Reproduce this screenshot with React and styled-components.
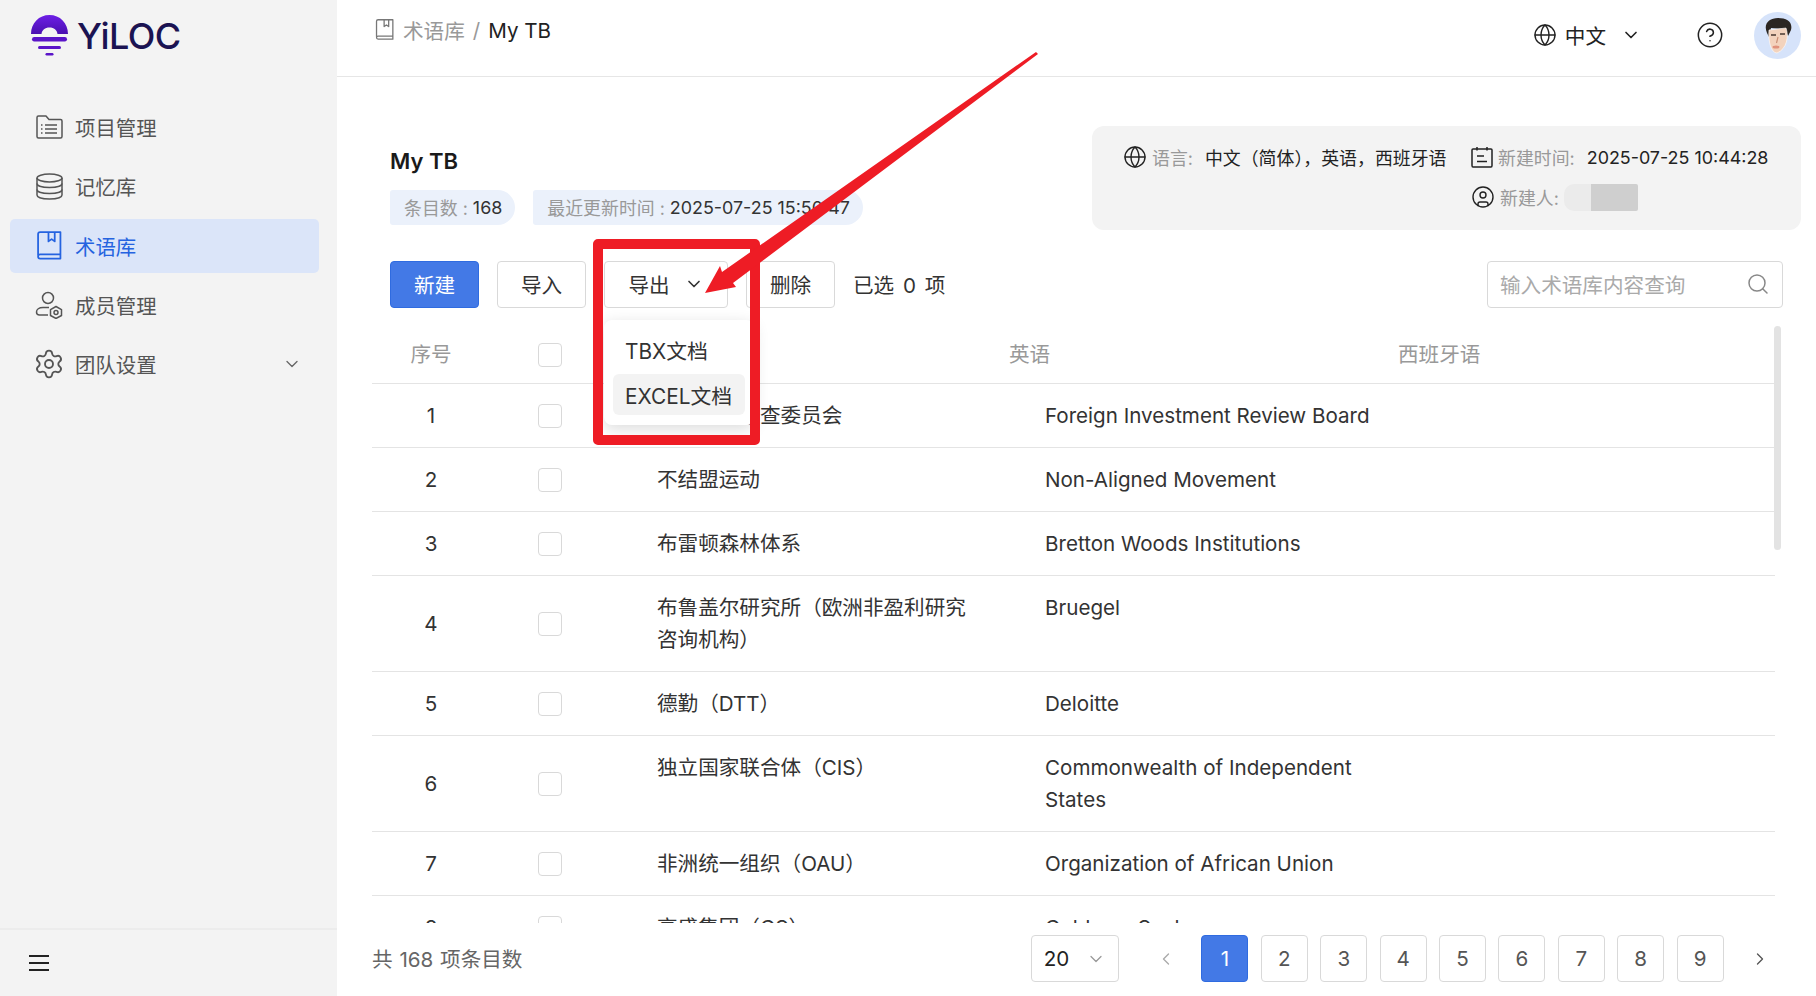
import React from 'react';
import styled, { createGlobalStyle } from 'styled-components';
import { ChevronDown, ChevronLeft, ChevronRight, CircleHelp, CircleUser, Globe, Search, Settings } from 'lucide-react';

const GlobalStyle = createGlobalStyle`
  html, body { margin: 0; padding: 0; background: #fff; }
  body { font-family: Inter, "Noto Sans CJK SC", "Liberation Sans", sans-serif; color: #333; }
  * { box-sizing: border-box; }
`;

const Page = styled.div`
  position: relative;
  display: flex;
  width: 1816px;
  height: 996px;
  overflow: hidden;
`;

const Sidebar = styled.aside`
  width: 337px;
  flex: none;
  display: flex;
  flex-direction: column;
  background: #f3f3f3;
`;

const LogoRow = styled.div`
  height: 100.5px;
  flex: none;
  padding: 15px 0 0 31px;
  display: flex;
  align-items: flex-start;
  gap: 9px;
`;

const LogoText = styled.span`
  font-size: 36px;
  line-height: 43px;
  font-weight: 500;
  letter-spacing: -0.6px;
  color: #1b1352;
`;

const Nav = styled.nav`
  flex: 1;
  padding: 0 18px 0 10px;
  display: flex;
  flex-direction: column;
  gap: 5.3px;
`;

const NavItem = styled.div`
  height: 54px;
  padding: 0 21px 1px 25px;
  display: flex;
  align-items: center;
  gap: 12px;
  border-radius: 5px;
  font-size: 20.4px;
  color: ${props => (props.$active ? '#2563e0' : '#555')};
  background: ${props => (props.$active ? '#dbe5f9' : 'transparent')};
`;

const NavIcon = styled.span`
  width: 28px;
  height: 28px;
  flex: none;
  display: flex;
  align-items: center;
  justify-content: center;
  svg { flex: none; }
`;

const NavArrow = styled.span`
  margin: 0 -4px 0 auto;
  display: flex;
  color: #666;
`;

const SideBottom = styled.div`
  height: 68px;
  flex: none;
  padding-left: 28px;
  display: flex;
  align-items: center;
  border-top: 2px solid #ececec;
`;

const Main = styled.main`
  flex: 1;
  min-width: 0;
  display: flex;
  flex-direction: column;
`;

const Header = styled.header`
  height: 77px;
  flex: none;
  padding: 0 15px 0 38px;
  display: flex;
  justify-content: space-between;
  align-items: flex-start;
  border-bottom: 1.5px solid #e6e6e6;
`;

const Breadcrumb = styled.div`
  height: 60px;
  display: flex;
  align-items: center;
  font-size: 20.6px;
`;

const CrumbIcon = styled.span`
  display: flex;
  margin-right: 9px;
  color: #777;
`;

const CrumbLink = styled.span`
  color: #999;
`;

const CrumbSep = styled.span`
  color: #999;
  margin: 0 8px;
`;

const CrumbNow = styled.span`
  color: #222;
`;

const HeaderRight = styled.div`
  height: 70px;
  display: flex;
  align-items: center;
`;

const LangPick = styled.div`
  display: flex;
  align-items: center;
  gap: 8px;
  font-size: 20.6px;
  color: #222;
  margin-right: 55px;
`;

const HelpIcon = styled.span`
  display: flex;
  color: #222;
  margin-right: 30px;
`;

const Avatar = styled.div`
  width: 47px;
  height: 47px;
  border-radius: 50%;
  overflow: hidden;
  background: #d6e3fa;
`;

const TopRow = styled.section`
  flex: none;
  margin-top: 49px;
  padding: 0 15px 0 53px;
  display: flex;
  justify-content: space-between;
  align-items: flex-start;
`;

const TitleBlock = styled.div`
  padding-top: 21px;
`;

const Title = styled.h1`
  margin: 0 0 15px;
  font-size: 22px;
  line-height: 28px;
  font-weight: 600;
  color: #1a1a1a;
`;

const Tags = styled.div`
  display: flex;
  gap: 18px;
`;

const Tag = styled.div`
  height: 35px;
  padding: 0 13px 1px 14px;
  display: flex;
  align-items: center;
  gap: 5px;
  font-size: 17.9px;
  color: #333;
  background: #ebf1fb;
  border-radius: 3px 18px 18px 3px;
`;

const TagLabel = styled.span`
  color: #999;
`;

const InfoPanel = styled.div`
  width: 709px;
  height: 104px;
  padding: 17px 0 0 31px;
  display: grid;
  grid-template-columns: 348px 1fr;
  grid-auto-rows: 28px;
  row-gap: 12px;
  background: #f3f3f3;
  border-radius: 12px;
  font-size: 17.9px;
`;

const InfoItem = styled.div`
  display: flex;
  align-items: center;
  grid-column: ${props => props.$col || 'auto'};
  white-space: nowrap;
  color: #222;
`;

const InfoIcon = styled.span`
  display: flex;
  margin-right: 5px;
  color: #222;
`;

const InfoLabel = styled.span`
  color: #999;
  margin-right: 12px;
`;

const Masked = styled.span`
  display: block;
  width: 74px;
  height: 27px;
  margin-left: -7px;
  border-radius: 10px 2px 2px 10px;
  background: linear-gradient(to right, #ebebeb 27px, #cfcfcf 27px);
`;

const Toolbar = styled.section`
  flex: none;
  margin-top: 31px;
  padding: 0 33px 0 53px;
  display: flex;
  align-items: center;
  gap: 18px;
`;

const Button = styled.div`
  height: 47px;
  width: ${props => props.$width || 89}px;
  padding-bottom: 2px;
  display: flex;
  align-items: center;
  justify-content: center;
  gap: 14px;
  font-size: 20.6px;
  border-radius: 4px;
  color: ${props => (props.$primary ? '#fff' : '#333')};
  background: ${props => (props.$primary ? '#4379e6' : '#fff')};
  border: 1px solid ${props => (props.$primary ? '#2f6be0' : '#d9d9d9')};
`;

const ExportWrap = styled.div`
  position: relative;
`;

const Dropdown = styled.div`
  position: absolute;
  left: 0;
  top: 59px;
  width: 150px;
  height: 105px;
  padding: 10px 9px;
  display: flex;
  flex-direction: column;
  gap: 3.5px;
  background: #fff;
  border-radius: 8px;
  box-shadow: 0 4px 16px rgba(0, 0, 0, 0.14);
  z-index: 5;
`;

const DropItem = styled.div`
  height: 41px;
  padding-left: 12px;
  display: flex;
  align-items: center;
  font-size: 20.8px;
  color: #333;
  border-radius: 6px;
  white-space: nowrap;
  background: ${props => (props.$hover ? '#f3f3f3' : 'transparent')};
`;

const RedBox = styled.div`
  position: absolute;
  left: -11px;
  top: -22px;
  width: 167px;
  height: 206px;
  border: 10px solid #ee1c25;
  border-radius: 5px;
  z-index: 6;
`;

const Selected = styled.span`
  font-size: 20.6px;
  word-spacing: 3px;
  color: #333;
  margin-bottom: 2px;
`;

const SearchBox = styled.div`
  margin-left: auto;
  width: 296px;
  height: 47px;
  padding: 0 12px 2px;
  display: flex;
  align-items: center;
  justify-content: space-between;
  border: 1px solid #d9d9d9;
  border-radius: 4px;
  font-size: 20.6px;
  color: #aaa;
  svg { color: #888; }
`;

const TableWrap = styled.section`
  position: relative;
  flex: 1;
  min-height: 0;
  margin: 18px 0 0 35px;
  overflow: hidden;
`;

const Table = styled.div`
  width: 1403px;
`;

const Row = styled.div`
  display: grid;
  grid-template-columns: 118px 120px 399px 389px 1fr;
  align-items: center;
  border-bottom: 1.5px solid #e4e4e4;
  font-size: 20.6px;
  line-height: 32px;
`;

const HeadRow = styled(Row)`
  height: 58px;
  color: #999;
`;

const BodyRow = styled(Row)`
  min-height: 64px;
  padding: 16px 0 15px;
  color: #333;
`;

const NumCell = styled.div`
  text-align: center;
`;

const CheckCell = styled.div`
  display: flex;
  justify-content: center;
`;

const TermCell = styled.div`
  align-self: start;
  padding: 0 30px 0 47px;
`;

const EnCell = styled.div`
  align-self: start;
  padding: 0 10px 0 36px;
`;

const Checkbox = styled.span`
  display: block;
  width: 24px;
  height: 24px;
  border: 1.5px solid #d9d9d9;
  border-radius: 4px;
  background: #fff;
`;

const ScrollThumb = styled.div`
  position: absolute;
  left: 1402px;
  top: 0;
  width: 7px;
  height: 224px;
  border-radius: 4px;
  background: #e3e3e3;
`;

const Footer = styled.footer`
  height: 73px;
  flex: none;
  padding: 0 33px 2px 35px;
  display: flex;
  align-items: center;
  justify-content: space-between;
  background: #fff;
`;

const Total = styled.span`
  font-size: 20.6px;
  word-spacing: 1px;
  color: #666;
  margin-bottom: 2px;
`;

const Pager = styled.div`
  display: flex;
  align-items: center;
  gap: 12.4px;
`;

const SizeSelect = styled.div`
  width: 88px;
  height: 47px;
  margin-right: 11px;
  padding: 0 12px;
  display: flex;
  align-items: center;
  justify-content: space-between;
  border: 1px solid #d9d9d9;
  border-radius: 4px;
  font-size: 20.6px;
  color: #222;
  svg { color: #999; }
`;

const PageArrow = styled.span`
  width: 47px;
  height: 47px;
  display: flex;
  align-items: center;
  justify-content: center;
  color: ${props => (props.$off ? '#aaa' : '#555')};
`;

const PageBtn = styled.div`
  width: 47px;
  height: 47px;
  display: flex;
  align-items: center;
  justify-content: center;
  font-size: 20.6px;
  border-radius: 4px;
  color: ${props => (props.$active ? '#fff' : '#555')};
  background: ${props => (props.$active ? '#4379e6' : '#fff')};
  border: 1px solid ${props => (props.$active ? '#2f6be0' : '#d9d9d9')};
`;

const ArrowLayer = styled.svg`
  position: absolute;
  left: 0;
  top: 0;
  z-index: 7;
  pointer-events: none;
`;

const rows = [
  { id: 1, term: '外国投资审查委员会', en: 'Foreign Investment Review Board' },
  { id: 2, term: '不结盟运动', en: 'Non-Aligned Movement' },
  { id: 3, term: '布雷顿森林体系', en: 'Bretton Woods Institutions' },
  { id: 4, term: '布鲁盖尔研究所（欧洲非盈利研究咨询机构）', en: 'Bruegel' },
  { id: 5, term: '德勤（DTT）', en: 'Deloitte' },
  { id: 6, term: '独立国家联合体（CIS）', en: 'Commonwealth of Independent States' },
  { id: 7, term: '非洲统一组织（OAU）', en: 'Organization of African Union' },
  { id: 8, term: '高盛集团（GS）', en: 'Goldman Sachs' },
];

const LogoMark = () => (
  <svg width="37" height="41" viewBox="0 0 37 41">
    <defs>
      <linearGradient id="logoFill" x1="0" y1="0" x2="0" y2="1">
        <stop offset="0" stopColor="#6d1fe6" />
        <stop offset="1" stopColor="#4a0fb0" />
      </linearGradient>
    </defs>
    <path d="M0 19C0 8 8 0 18.500 0S37 8 37 19H26.500C26 15 23 12.500 18.500 12.500S11 15 10.500 19Z" fill="url(#logoFill)" />
    <rect x="1" y="22" width="35" height="4.500" rx="2.200" fill="#5a14c8" />
    <rect x="7" y="31" width="23" height="3" rx="1.500" fill="#5a14c8" />
    <rect x="14.500" y="38" width="8" height="2.500" rx="1.200" fill="#5a14c8" />
  </svg>
);

const FolderIcon = () => (
  <svg width="27" height="24" viewBox="0 0 27 24" fill="none" stroke="currentColor" strokeWidth="1.500" strokeLinejoin="round">
    <path d="M1 2.500C1 1.500 1.500 1 2.500 1H10L13 4.500H24.500C25.500 4.500 26 5 26 6V21.500C26 22.500 25.500 23 24.500 23H2.500C1.500 23 1 22.500 1 21.500Z" />
    <path d="M9 10H21M9 14H21M9 18H21M5 10H6.500M5 14H6.500M5 18H6.500" />
  </svg>
);

const DatabaseIcon = () => (
  <svg width="27" height="27" viewBox="0 0 27 27" fill="none" stroke="currentColor" strokeWidth="1.500">
    <ellipse cx="13.500" cy="5" rx="12.500" ry="4" />
    <path d="M1 5V22C1 24.500 6.500 26 13.500 26S26 24.500 26 22V5" />
    <path d="M1 10.500C1 13 6.500 14.500 13.500 14.500S26 13 26 10.500" />
    <path d="M1 16.500C1 19 6.500 20.500 13.500 20.500S26 19 26 16.500" />
  </svg>
);

const BookIcon = ({ size = 26 }) => (
  <svg width={size} height={size * 1.12} viewBox="0 0 25 28" fill="none" stroke="currentColor" strokeWidth="1.700" strokeLinejoin="round">
    <path d="M2 23.500V3C2 2 2.500 1 4 1H23.500V26.500H4C2.500 26.500 2 25.500 2 24.500C2 23 3 22.500 4 22.500H23.500" />
    <path d="M12 1V10L15 7.800L18 10V1" />
  </svg>
);

const MemberIcon = () => (
  <svg width="28" height="28" viewBox="0 0 28 28" fill="none" stroke="currentColor" strokeWidth="1.500" strokeLinejoin="round">
    <circle cx="13" cy="7" r="5.500" />
    <path d="M14 16.500H8C4 16.500 1.500 18.500 1.500 21C1.500 23 2.500 24 4.500 24H13" />
    <path d="M21 15.500L26.500 18.700V24.500L21 27.500L15.500 24.500V18.700Z" />
    <circle cx="21" cy="21.500" r="2" />
  </svg>
);

const CalendarIcon = () => (
  <svg width="22" height="22" viewBox="0 0 22 22" fill="none" stroke="currentColor" strokeWidth="1.500" strokeLinejoin="round">
    <path d="M6 3H16M6 1V4.500M16 1V4.500M6 3H2C1.500 3 1 3.500 1 4V19.500C1 20.500 1.500 21 2 21H20C20.500 21 21 20.500 21 19.500V4C21 3.500 20.500 3 20 3H16" />
    <path d="M6 10H13M6 15.500H16" />
  </svg>
);

const MenuIcon = () => (
  <svg width="22" height="18" viewBox="0 0 22 18" stroke="#222" strokeWidth="2">
    <path d="M1 2H21M1 9H21M1 16H21" />
  </svg>
);

const Face = () => (
  <svg width="47" height="47" viewBox="0 0 47 47">
    <path d="M13 21C9 12 15 6 24 6C33 6 39 10 37 18L34 24L31 17L17 16L15 25Z" fill="#2b2622" />
    <path d="M15 18L32 16C35 24 33 37 23 41C17 41 14 29 15 18Z" fill="#f3d3bd" stroke="#fff" strokeWidth="0.600" />
    <path d="M17 23H22M26 22H31" stroke="#4a3a32" strokeWidth="1.500" />
    <path d="M24 25L22.500 31" stroke="#c98f76" strokeWidth="1.200" fill="none" />
    <ellipse cx="22" cy="35" rx="3.500" ry="1.500" fill="#e0927c" />
  </svg>
);

const navItems = [
  { label: '项目管理', icon: <FolderIcon /> },
  { label: '记忆库', icon: <DatabaseIcon /> },
  { label: '术语库', icon: <BookIcon />, active: true },
  { label: '成员管理', icon: <MemberIcon /> },
  { label: '团队设置', icon: <Settings size={32} strokeWidth={1.4} />, more: true },
];

const pages = [1, 2, 3, 4, 5, 6, 7, 8, 9];

const App = () => (
  <Page>
    <GlobalStyle />
    <Sidebar>
      <LogoRow>
        <LogoMark />
        <LogoText>YiLOC</LogoText>
      </LogoRow>
      <Nav>
        {navItems.map(item => (
          <NavItem key={item.label} $active={item.active}>
            <NavIcon>{item.icon}</NavIcon>
            {item.label}
            {item.more && <NavArrow><ChevronDown size={20} strokeWidth={1.6} /></NavArrow>}
          </NavItem>
        ))}
      </Nav>
      <SideBottom><MenuIcon /></SideBottom>
    </Sidebar>
    <Main>
      <Header>
        <Breadcrumb>
          <CrumbIcon><BookIcon size={19} /></CrumbIcon>
          <CrumbLink>术语库</CrumbLink>
          <CrumbSep>/</CrumbSep>
          <CrumbNow>My TB</CrumbNow>
        </Breadcrumb>
        <HeaderRight>
          <LangPick>
            <Globe size={24} strokeWidth={1.4} />
            <span>中文</span>
            <ChevronDown size={20} strokeWidth={2} style={{ marginLeft: 7 }} />
          </LangPick>
          <HelpIcon><CircleHelp size={28} strokeWidth={1.3} /></HelpIcon>
          <Avatar><Face /></Avatar>
        </HeaderRight>
      </Header>
      <TopRow>
        <TitleBlock>
          <Title>My TB</Title>
          <Tags>
            <Tag><TagLabel>条目数 :</TagLabel>168</Tag>
            <Tag><TagLabel>最近更新时间 :</TagLabel>2025-07-25 15:50:47</Tag>
          </Tags>
        </TitleBlock>
        <InfoPanel>
          <InfoItem>
            <InfoIcon><Globe size={24} strokeWidth={1.4} /></InfoIcon>
            <InfoLabel>语言:</InfoLabel>
            中文（简体），英语，西班牙语
          </InfoItem>
          <InfoItem>
            <InfoIcon><CalendarIcon /></InfoIcon>
            <InfoLabel>新建时间:</InfoLabel>
            2025-07-25 10:44:28
          </InfoItem>
          <InfoItem $col="2">
            <InfoIcon><CircleUser size={24} strokeWidth={1.4} /></InfoIcon>
            <InfoLabel>新建人:</InfoLabel>
            <Masked />
          </InfoItem>
        </InfoPanel>
      </TopRow>
      <Toolbar>
        <Button $primary>新建</Button>
        <Button>导入</Button>
        <ExportWrap>
          <Button $width={124}>导出<ChevronDown size={20} strokeWidth={2} /></Button>
          <Dropdown>
            <DropItem>TBX文档</DropItem>
            <DropItem $hover>EXCEL文档</DropItem>
          </Dropdown>
          <RedBox />
        </ExportWrap>
        <Button>删除</Button>
        <Selected>已选 0 项</Selected>
        <SearchBox>
          <span>输入术语库内容查询</span>
          <Search size={24} strokeWidth={1.5} />
        </SearchBox>
      </Toolbar>
      <TableWrap>
        <Table>
          <HeadRow>
            <NumCell>序号</NumCell>
            <CheckCell><Checkbox /></CheckCell>
            <div />
            <div>英语</div>
            <div>西班牙语</div>
          </HeadRow>
          {rows.map(row => (
            <BodyRow key={row.id}>
              <NumCell>{row.id}</NumCell>
              <CheckCell><Checkbox /></CheckCell>
              <TermCell>{row.term}</TermCell>
              <EnCell>{row.en}</EnCell>
              <div />
            </BodyRow>
          ))}
        </Table>
        <ScrollThumb />
      </TableWrap>
      <Footer>
        <Total>共 168 项条目数</Total>
        <Pager>
          <SizeSelect>20<ChevronDown size={20} strokeWidth={1.5} /></SizeSelect>
          <PageArrow $off><ChevronLeft size={20} strokeWidth={1.6} /></PageArrow>
          {pages.map(p => (
            <PageBtn key={p} $active={p === 1}>{p}</PageBtn>
          ))}
          <PageArrow><ChevronRight size={20} strokeWidth={1.6} /></PageArrow>
        </Pager>
      </Footer>
    </Main>
    <ArrowLayer width="1816" height="996" viewBox="0 0 1816 996">
      <polygon points="705,293 720,266 722,272 1036,52 1038,54 733,283 736,287" fill="#ee1c25" />
    </ArrowLayer>
  </Page>
);

export default App;
